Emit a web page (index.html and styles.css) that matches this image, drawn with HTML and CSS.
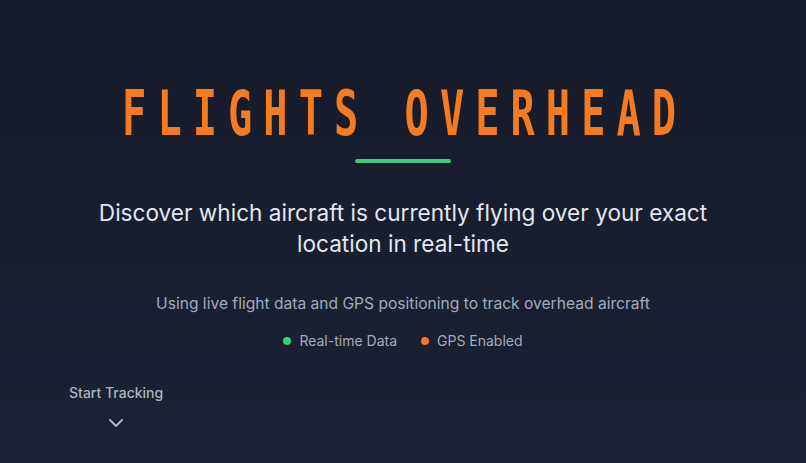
FILE: index.html
```html
<!DOCTYPE html>
<html lang="en">
<head>
<meta charset="utf-8">
<title>Flights Overhead</title>
<link rel="stylesheet" href="styles.css">
</head>
<body>
<main class="hero">
  <h1 class="title"><span class="title-inner">FLIGHTS OVERHEAD</span></h1>
  <div class="accent-bar"></div>
  <p class="lead">Discover which aircraft is currently flying over your exact location in real-time</p>
  <p class="sub">Using live flight data and GPS positioning to track overhead aircraft</p>
  <div class="badges">
    <span class="badge"><span class="dot dot-green"></span>Real-time Data</span>
    <span class="badge"><span class="dot dot-orange"></span>GPS Enabled</span>
  </div>
  <div class="start">
    <span class="start-label">Start Tracking</span>
    <svg class="chevron" width="16" height="10" viewBox="0 0 16 10" fill="none"><path d="M2 2l6 6 6-6" stroke="#aab3c2" stroke-width="2" stroke-linecap="round" stroke-linejoin="round"/></svg>
  </div>
</main>
</body>
</html>
```
FILE: styles.css
```css
html, body {
  margin: 0;
  padding: 0;
}
body {
  width: 806px;
  height: 463px;
  overflow: hidden;
  background: linear-gradient(180deg, #161b2a 0%, #1b2233 100%);
  font-family: "Inter", "DejaVu Sans", sans-serif;
}
.hero {
  display: flex;
  flex-direction: column;
  align-items: center;
  padding-top: 84px;
}
.title {
  margin: 0;
  height: 60px;
  font-family: "DejaVu Sans Mono", monospace;
  font-weight: bold;
  font-size: 62px;
  line-height: 60px;
  color: #f47b20;
  white-space: nowrap;
  display: flex;
  justify-content: center;
  width: 806px;
}
.title-inner {
  display: inline-block;
  letter-spacing: 17px;
  margin-right: -17px;
  transform: translateX(-7px) scaleX(0.65);
}
.accent-bar {
  margin-top: 15px;
  width: 96px;
  height: 4px;
  border-radius: 2px;
  background: #3ecf74;
}
.lead {
  margin: 34px 0 0;
  max-width: 640px;
  text-align: center;
  font-size: 22.6px;
  line-height: 31px;
  color: #e2e6ee;
}
.sub {
  margin: 34px 0 0;
  font-size: 15.6px;
  line-height: 22px;
  color: #a3abba;
}
.badges {
  margin-top: 16px;
  display: flex;
  gap: 24px;
  font-size: 14px;
  line-height: 20px;
  color: #a3abba;
}
.badge {
  display: flex;
  align-items: center;
  gap: 8px;
}
.dot {
  width: 8px;
  height: 8px;
  border-radius: 50%;
}
.dot-green { background: #3ecf74; }
.dot-orange { background: #f47b20; }
.start {
  align-self: flex-start;
  margin: 32px 0 0 69px;
  display: flex;
  flex-direction: column;
  align-items: center;
  gap: 15px;
}
.start-label {
  font-size: 14px;
  line-height: 20px;
  font-weight: 500;
  color: #aab3c2;
}
.chevron {
  display: block;
}
```
